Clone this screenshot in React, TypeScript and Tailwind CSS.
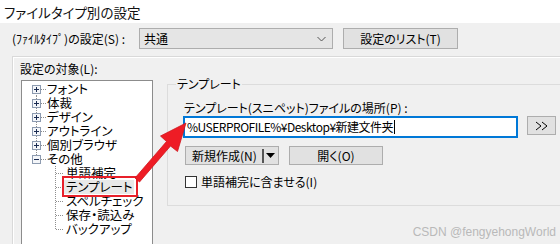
import React from "react";

const font = "[font-family:'Noto_Sans_CJK_JP','Noto_Sans',sans-serif] [font-feature-settings:'palt']";

function TopGutter({ first, last }: { first?: boolean; last?: boolean }) {
  return (
    <svg width="25" height="14" className="shrink-0" shapeRendering="crispEdges">
      <line
        x1="14.5"
        y1={first ? 7 : 0}
        x2="14.5"
        y2={last ? 7 : 14}
        stroke="#8f8f8f"
        strokeDasharray="1 1"
      />
      <line x1="19" y1="7.5" x2="25" y2="7.5" stroke="#8f8f8f" strokeDasharray="1 1" />
      <rect x="10.5" y="3.5" width="8" height="8" fill="#f4f6f9" stroke="#8d9bb0" />
      <line x1="12" y1="7.5" x2="17" y2="7.5" stroke="#1b2c52" />
      {!last && <line x1="14.5" y1="5" x2="14.5" y2="10" stroke="#1b2c52" />}
    </svg>
  );
}

function ChildGutter({ last }: { last?: boolean }) {
  return (
    <svg width="42" height="14" className="shrink-0" shapeRendering="crispEdges">
      <line x1="33.5" y1="0" x2="33.5" y2={last ? 7 : 14} stroke="#8f8f8f" strokeDasharray="1 1" />
      <line x1="34" y1="7.5" x2="42" y2="7.5" stroke="#8f8f8f" strokeDasharray="1 1" />
    </svg>
  );
}

export default function App() {
  const top = ["フォント", "体裁", "デザイン", "アウトライン", "個別ブラウザ"];
  const children = ["単語補完", "テンプレート", "スペルチェック", "保存・読込み", "バックアップ"];
  return (
    <div className={`relative w-[560px] h-[244px] overflow-hidden bg-[#f0f0f0] text-[12px] leading-[14px] text-black ${font}`}>
      <div className="h-[23px] bg-white pl-[4px] flex items-center text-[13.5px] text-[#111]">
        ファイルタイプ別の設定
      </div>

      <div className="flex items-center pl-[12px] pt-[5px] h-[26px]">
        <div className="w-[127px] whitespace-nowrap">(ﾌｧｲﾙﾀｲﾌﾟ)の設定(S) :</div>
        <div className="w-[194px] h-[21px] border border-[#adadad] bg-[#e5e5e5] flex items-center justify-between pl-[4px] pr-[6px]">
          <span>共通</span>
          <svg width="9" height="6" viewBox="0 0 9 6">
            <path d="M0.5 1 L4.5 5 L8.5 1" fill="none" stroke="#555" strokeWidth="1" />
          </svg>
        </div>
        <div className="ml-[10px] w-[115px] h-[21px] border border-[#adadad] bg-[#e1e1e1] flex items-center justify-center">
          設定のリスト(T)
        </div>
      </div>

      <div className="mt-[7px] ml-[12px] h-[200px] border-t border-l border-[#d9d9d9]">
        <div className="border-t border-l border-white h-full">
          <div className="pl-[6px] pt-[4px] h-[22px]">設定の対象(L):</div>
          <div className="flex">
            <div className="ml-[7px] w-[132px] h-[180px] bg-white border border-[#8c8c8c] pt-[1px] shrink-0">
              {top.map((t, i) => (
                <div key={t} className="flex items-center h-[14px]">
                  <TopGutter first={i === 0} />
                  <span className="whitespace-nowrap text-[12.5px]">{t}</span>
                </div>
              ))}
              <div className="flex items-center h-[14px]">
                <svg width="25" height="14" className="shrink-0" shapeRendering="crispEdges">
                  <line x1="14.5" y1="0" x2="14.5" y2="4" stroke="#8f8f8f" strokeDasharray="1 1" />
                  <line x1="19" y1="7.5" x2="25" y2="7.5" stroke="#8f8f8f" strokeDasharray="1 1" />
                  <rect x="10.5" y="3.5" width="8" height="8" fill="#f4f6f9" stroke="#8d9bb0" />
                  <line x1="12" y1="7.5" x2="17" y2="7.5" stroke="#1b2c52" />
                </svg>
                <span className="whitespace-nowrap text-[12.5px]">その他</span>
              </div>
              {children.map((c, i) => (
                <div key={c} className="flex items-center h-[14px]">
                  <ChildGutter last={i === children.length - 1} />
                  <span
                    className={
                      "whitespace-nowrap pl-[2px] pr-[2px] text-[12.5px] " +
                      (i === 1 ? "bg-[#e8e8e8] w-[70px] h-[14px]" : "")
                    }
                  >
                    {c}
                  </span>
                </div>
              ))}
            </div>

            <fieldset className="ml-[14px] mt-[-3px] w-[410px] h-[129px] border border-[#dcdcdc] shrink-0 pl-[16px]">
              <legend className="ml-[-8px] px-[1px] leading-[14px]">テンプレート</legend>
              <div className="pt-[10px] h-[25px] leading-[14px]">テンプレート(スニペット)ファイルの場所(P) :</div>
              <div className="flex items-start ml-[-1px]">
                <div className="w-[335px] h-[22px] border-2 border-[#0078d7] bg-white flex items-center pl-[2px]">
                  <span className="tracking-[-0.5px]">%USERPROFILE%¥Desktop¥新建文件夹</span>
                  <span className="ml-[1px] w-px h-[14px] bg-black" />
                </div>
                <div className="ml-[9px] w-[29px] h-[19px] border border-[#adadad] bg-[#e1e1e1] flex items-center justify-center">
                  <svg width="14" height="10" viewBox="0 0 14 10">
                    <path d="M1 1 L6 5 L1 9 M7 1 L12 5 L7 9" fill="none" stroke="#000" strokeWidth="1" />
                  </svg>
                </div>
              </div>
              <div className="flex mt-[8px] ml-[1px]">
                <div className="w-[94px] h-[19px] border border-[#adadad] bg-[#e1e1e1] flex items-center pl-[6px]">
                  <span>新規作成(N)</span>
                  <span className="ml-[5px] w-[2px] h-[14px] bg-[#555]" />
                  <svg width="9" height="6" viewBox="0 0 9 6" className="ml-[2px]">
                    <path d="M0 0 L9 0 L4.5 5 Z" fill="#000" />
                  </svg>
                </div>
                <div className="ml-[10px] w-[94px] h-[19px] border border-[#adadad] bg-[#e1e1e1] flex items-center justify-center">
                  開く(O)
                </div>
              </div>
              <div className="flex items-center mt-[10px] ml-[1px]">
                <div className="w-[12px] h-[12px] border border-[#333] bg-white" />
                <span className="ml-[4px]">単語補完に含ませる(I)</span>
              </div>
            </fieldset>
          </div>
        </div>
      </div>

      <div className="absolute left-[62px] top-[176px] w-[76px] h-[21px] border-2 border-[#e8202a]" />
      <svg className="absolute left-0 top-0" width="560" height="244">
        <polygon
          points="135,178 139.5,182 170.5,146 177.5,151.5 186,123 160.5,136 166.5,141.5"
          fill="#ee1c25"
          stroke="#d0161d"
          strokeWidth="0.8"
          strokeLinejoin="round"
        />
      </svg>
      <div className="absolute right-[4px] bottom-[5px] text-[12px] leading-[14px] text-[#b9b9b9] [font-family:'Liberation_Sans',sans-serif]">
        CSDN @fengyehongWorld
      </div>
    </div>
  );
}
